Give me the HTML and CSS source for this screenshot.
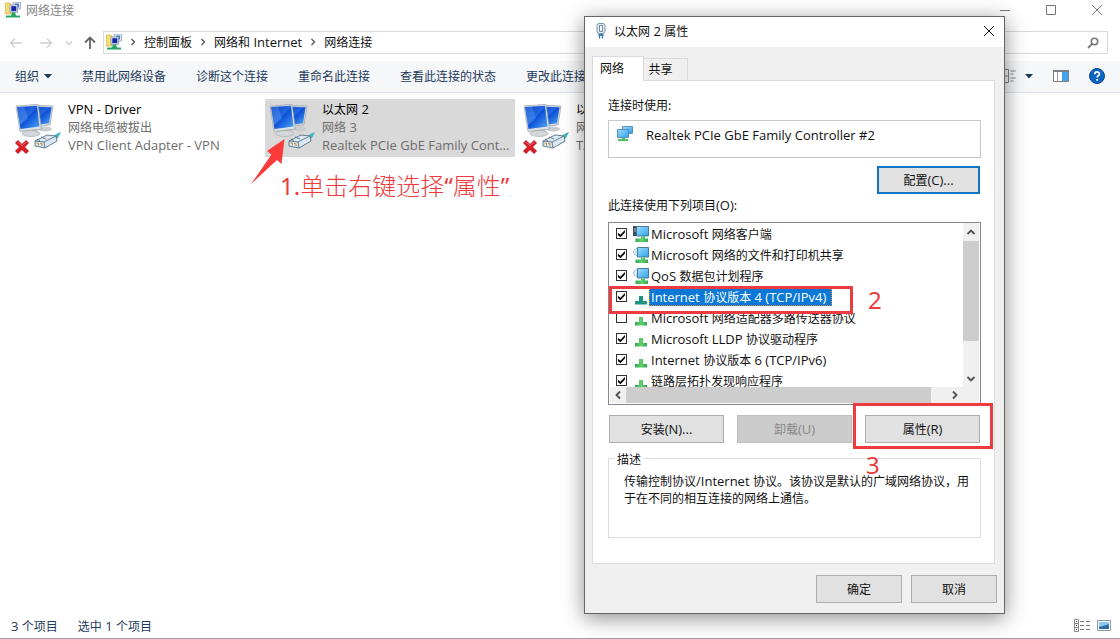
FILE: index.html
```html
<!DOCTYPE html>
<html lang="zh-CN">
<head>
<meta charset="utf-8">
<meta name="viewport" content="width=device-width, initial-scale=1">
<title>网络连接</title>
<link rel="stylesheet" href="styles.css">
</head>
<body>
<svg class="defs" aria-hidden="true">
  <defs>
    <linearGradient id="screen" x1="0" y1="0" x2="1" y2="1">
      <stop offset="0" stop-color="#0a3fc4"/><stop offset=".45" stop-color="#2368e0"/><stop offset=".5" stop-color="#0d4fd6"/><stop offset="1" stop-color="#4fa8f6"/>
    </linearGradient>
    <linearGradient id="sky" x1="0" y1="0" x2="1" y2="1">
      <stop offset="0" stop-color="#9edcfc"/><stop offset="1" stop-color="#2fa3ee"/>
    </linearGradient>
    <linearGradient id="leaf" x1="0" y1="0" x2="1" y2="0">
      <stop offset="0" stop-color="#2fa84f"/><stop offset=".5" stop-color="#63d26f"/><stop offset="1" stop-color="#2fa84f"/>
    </linearGradient>
    <symbol id="folder-net" viewBox="0 0 16 16">
      <path d="M0 1h5l1 1v10H0z" fill="#f3dc73" stroke="#c9a83a" stroke-width=".6"/>
      <path d="M8 0h7.500v7H8z" fill="#dfe6ee" stroke="#8a98ab" stroke-width=".7"/>
      <path d="M10 1.500h4v4h-4z" fill="#4a78d8"/>
      <path d="M5 3h7.500v7.500H5z" fill="#dfe6ee" stroke="#7d8da3" stroke-width=".7"/>
      <path d="M6.300 4.200h5v5h-5z" fill="#1626a5"/>
      <path d="M7 10.500h3l1 3h4v2H1v-2h5z" fill="#27a565"/>
      <path d="M1 13.500h4M11 13.500h4" stroke="#9bdcc0"/>
    </symbol>
    <symbol id="adapter" viewBox="0 0 48 50">
      <ellipse cx="30" cy="27" rx="7" ry="2.500" fill="#c9ccd0"/>
      <path d="M15 3l23 1-3 19-18 2z" fill="#d3d8dd" stroke="#9ba2aa" stroke-width=".7"/>
      <path d="M16 4.500l20.500.8-2.500 16-16 2z" fill="url(#screen)"/>
      <path d="M14 28l8-1 2 5h-9z" fill="#c3c7cc"/>
      <ellipse cx="16" cy="31.500" rx="9" ry="3" fill="#d5d8db" stroke="#a8adb3" stroke-width=".7"/>
      <path d="M1 4l22-1.500L26.500 27 5 29.500z" fill="#dde1e5" stroke="#9ba2aa" stroke-width=".7"/>
      <path d="M2 5l20-1.200L24.500 24.500 5.500 27z" fill="url(#screen)"/>
      <path d="M2 5l7-.4 4 12-8 7z" fill="#6fb4fb" opacity=".3"/>
      <path d="M36 36c4-3 6-5 10-6l-3 6-5 3z" fill="#40b7c2"/>
      <path d="M20 39l12-6 9 1 1 5-12 7-10-2z" fill="#dbe8f2" stroke="#587087" stroke-width=".9"/>
      <path d="M20 39l9 1 12-6M29 40l1 6M22 37l3 2M26 35l5 2" fill="none" stroke="#587087" stroke-width=".9"/>
      <path d="M21.500 41l2 .3v2.200M25 41.500l2 .3v2.200" fill="none" stroke="#b58a36"/>
    </symbol>
    <symbol id="cross" viewBox="0 0 14 14">
      <path d="M3 .5l4 4 4-4 2.500 2.500-4 4 4 4-2.500 2.500-4-4-4 4L.5 11l4-4-4-4z" fill="#e01b24" stroke="#9e0f16" stroke-width=".8"/>
      <path d="M3 2l4 4 4-4" fill="none" stroke="#f78a8c" stroke-width=".7"/>
    </symbol>
    <symbol id="pcs" viewBox="0 0 16 16">
      <path d="M5.500.5h10v7h-10z" fill="url(#sky)" stroke="#3a7fb0" stroke-width=".8"/>
      <path d="M.5 3.500h11v8H.5z" fill="url(#sky)" stroke="#3a7fb0" stroke-width=".8"/>
      <path d="M5 12h3v1h3v2H1v-2h4z" fill="#4cbd62"/>
    </symbol>
    <symbol id="client" viewBox="0 0 16 16">
      <path d="M0 0h5v10H0z" fill="#3e4c59"/><path d="M1 3h3M1 5h3" stroke="#a9bac9"/>
      <path d="M3.500.5h12v9.500h-12z" fill="url(#sky)" stroke="#3f6f92" stroke-width=".9"/>
      <path d="M8 10.500h4v2h3V16H2.500v-3.500H8z" fill="url(#leaf)"/>
    </symbol>
    <symbol id="service" viewBox="0 0 16 16">
      <circle cx="4" cy="5" r="3.500" fill="#dce8f2" stroke="#7e9bb3" stroke-dasharray="1.500 1"/>
      <path d="M4.500.5h11v9.500h-11z" fill="url(#sky)" stroke="#3f6f92" stroke-width=".9"/>
      <path d="M8 10.500h4v2h3V16H2.500v-3.500H8z" fill="url(#leaf)"/>
    </symbol>
    <symbol id="protocol" viewBox="0 0 16 16">
      <path d="M6 7h4v5h4v3.500H2V12h4z" fill="url(#leaf)"/>
    </symbol>
    <symbol id="protocol-on" viewBox="0 0 16 16">
      <path d="M6 7h4v5h4v3.500H2V12h4z" fill="#1f9385"/>
    </symbol>
    <symbol id="close" viewBox="0 0 12 12"><path d="M1 1l10 10M11 1L1 11" fill="none" stroke="currentColor"/></symbol>
    <symbol id="chev" viewBox="0 0 6 8"><path d="M1.500 1l3 3-3 3" fill="none" stroke="currentColor" stroke-width="1.300"/></symbol>
    <symbol id="caret" viewBox="0 0 8 5"><path d="M0 0h8L4 4.500z" fill="currentColor"/></symbol>
  </defs>
</svg>

<div class="explorer">
  <header class="titlebar">
    <svg class="i16"><use href="#folder-net"/></svg>
    <h1 class="title">网络连接</h1>
    <div class="controls">
      <button type="button" aria-label="最小化"><svg viewBox="0 0 12 12"><path d="M1 6.500h10" stroke="currentColor"/></svg></button>
      <button type="button" aria-label="最大化"><svg viewBox="0 0 12 12"><path d="M1.500 1.500h9v9h-9z" fill="none" stroke="currentColor"/></svg></button>
      <button type="button" aria-label="关闭"><svg><use href="#close"/></svg></button>
    </div>
  </header>

  <div class="location">
    <button type="button" class="nav" aria-label="后退"><svg viewBox="0 0 14 14"><path d="M13 7H1.500M6 2.500L1.500 7 6 11.500" fill="none" stroke="currentColor" stroke-width="1.300"/></svg></button>
    <button type="button" class="nav" aria-label="前进"><svg viewBox="0 0 14 14"><path d="M1 7h11.500M8 2.500L12.500 7 8 11.500" fill="none" stroke="currentColor" stroke-width="1.300"/></svg></button>
    <button type="button" class="nav recent" aria-label="最近浏览的位置"><svg viewBox="0 0 8 8"><path d="M1 2.500l3 3 3-3" fill="none" stroke="currentColor" stroke-width="1.300"/></svg></button>
    <button type="button" class="nav up" aria-label="上移"><svg viewBox="0 0 14 14"><path d="M7 13V2M2 6.500L7 1.500l5 5" fill="none" stroke="currentColor" stroke-width="1.800"/></svg></button>
    <nav class="crumbs" aria-label="地址">
      <svg class="i16"><use href="#folder-net"/></svg>
      <svg class="chev"><use href="#chev"/></svg>
      <a href="#">控制面板</a>
      <svg class="chev"><use href="#chev"/></svg>
      <a href="#">网络和<span class="en"> Internet</span></a>
      <svg class="chev"><use href="#chev"/></svg>
      <a href="#">网络连接</a>
    </nav>
    <div class="search">
      <input type="search" aria-label="搜索">
      <svg viewBox="0 0 12 12"><circle cx="7.500" cy="4.500" r="3.200" fill="none" stroke="currentColor" stroke-width="1.600"/><path d="M5 7L1 11" stroke="currentColor" stroke-width="1.800"/></svg>
    </div>
  </div>

  <div class="toolbar">
    <button type="button" class="organize">组织 <svg class="caret"><use href="#caret"/></svg></button>
    <button type="button">禁用此网络设备</button>
    <button type="button">诊断这个连接</button>
    <button type="button">重命名此连接</button>
    <button type="button">查看此连接的状态</button>
    <button type="button">更改此连接的设置</button>
    <div class="views">
      <button type="button" aria-label="更改视图"><svg class="i16" viewBox="0 0 16 16"><path d="M1.500 1.500h6v13h-6zM1.500 8h6M9.500 3h5M9.500 6h3M9.500 10h5M9.500 13h3" fill="none" stroke="#7c8188"/></svg><svg class="caret"><use href="#caret"/></svg></button>
      <button type="button" aria-label="预览窗格"><svg class="i16" viewBox="0 0 16 16"><path d="M.5 2.500h15v11H.5z" fill="#fff" stroke="#7c8188"/><path d="M0 3h16" stroke="#7c8188" stroke-width="2"/><path d="M4.500 4v9" stroke="#9aa0a6"/><path d="M9 4h6v9H9z" fill="#43a3f0"/></svg></button>
      <button type="button" aria-label="帮助"><svg class="i16" viewBox="0 0 16 16"><circle cx="8" cy="8" r="7.500" fill="#0b66c3" stroke="#07498f"/><path d="M5.800 6.200c0-3 4.600-3 4.600-.2 0 1.600-2.200 1.500-2.200 3.600M8.200 11v1.800" fill="none" stroke="#fff" stroke-width="1.700"/></svg></button>
    </div>
  </div>

  <main class="files">
    <article class="file">
      <div class="pic"><svg class="big"><use href="#adapter"/></svg><svg class="badge"><use href="#cross"/></svg></div>
      <div class="info"><p class="name en">VPN - Driver</p><p>网络电缆被拔出</p><p class="en">VPN Client Adapter - VPN</p></div>
    </article>
    <article class="file selected">
      <div class="pic"><svg class="big"><use href="#adapter"/></svg></div>
      <div class="info"><p class="name">以太网<span class="en"> 2</span></p><p>网络<span class="en"> 3</span></p><p class="en">Realtek PCIe GbE Family Controller #2</p></div>
      <svg class="arrow" viewBox="0 0 36 48"><path d="M34.500 1L17 13l4.500 3.500L1 46l26-24 4.500 4z" fill="#fb3a3a"/></svg>
      <p class="mark step-one"><span class="num">1.</span>单击右键选择<span class="num">“</span>属性<span class="num">”</span></p>
    </article>
    <article class="file">
      <div class="pic"><svg class="big"><use href="#adapter"/></svg><svg class="badge"><use href="#cross"/></svg></div>
      <div class="info"><p class="name">以太网</p><p>网络电缆被拔出</p><p class="en">TAP Adapter</p></div>
    </article>
  </main>

  <footer class="status">
    <span><span class="en">3 </span>个项目</span>
    <span>选中<span class="en"> 1 </span>个项目</span>
    <div class="modes">
      <button type="button" aria-label="详细信息"><svg class="i16" viewBox="0 0 16 14"><path d="M.5.5h4v12h-4zM.5 4.500h4M.5 8.500h4" fill="none" stroke="#8a8a8a"/><path d="M2 2.500h1M2 6.500h1M2 10.500h1" stroke="#555"/><path d="M6 2.500h10M6 6.500h10M6 10.500h10" stroke="#777" stroke-dasharray="4 2"/></svg></button>
      <button type="button" aria-label="大图标"><svg class="i16" viewBox="0 0 16 14"><path d="M1.500 1.500h13v10h-13z" fill="#fff" stroke="#8a98a8"/><path d="M3 3h10v7H3z" fill="#8cc8f2"/><path d="M3 8l4-1 6-2v5H3z" fill="#2c6ba6"/></svg></button>
    </div>
  </footer>
</div>

<section class="dialog" role="dialog" aria-labelledby="dlg-title">
  <header class="dlg-bar">
    <svg class="plug" viewBox="0 0 10 16"><rect x="1" y=".5" width="8" height="10" rx="2" fill="#dfeaf3" stroke="#7d99b0"/><path d="M3.500 2.500h3v6h-3z" fill="#fff" stroke="#6e8ba5"/><path d="M2.500 11h5v2h-5z" fill="#3f7fb5"/><path d="M3.500 13v2.500M6.500 13v2.500" stroke="#3a75ab" stroke-width="1.300"/></svg>
    <h2 class="title" id="dlg-title">以太网<span class="en"> 2 </span>属性</h2>
    <button type="button" class="dlg-close" aria-label="关闭"><svg><use href="#close"/></svg></button>
  </header>
  <div class="dlg-body">
    <div class="tabs" role="tablist">
      <button type="button" role="tab" class="tab active" aria-selected="true">网络</button>
      <button type="button" role="tab" class="tab" aria-selected="false">共享</button>
    </div>
    <div class="panel">
      <p class="label">连接时使用:</p>
      <div class="device"><svg class="i16"><use href="#pcs"/></svg><span class="en">Realtek PCIe GbE Family Controller #2</span></div>
      <button type="button" class="btn configure">配置<span class="en">(C)...</span></button>
      <p class="label">此连接使用下列项目<span class="en">(O):</span></p>
      <div class="listbox">
        <div class="items">
          <label class="item"><input type="checkbox" checked><svg class="i16"><use href="#client"/></svg><span class="txt"><span class="en">Microsoft </span>网络客户端</span></label>
          <label class="item"><input type="checkbox" checked><svg class="i16"><use href="#service"/></svg><span class="txt"><span class="en">Microsoft </span>网络的文件和打印机共享</span></label>
          <label class="item"><input type="checkbox" checked><svg class="i16"><use href="#service"/></svg><span class="txt"><span class="en">QoS </span>数据包计划程序</span></label>
          <label class="item current"><input type="checkbox" checked><svg class="i16"><use href="#protocol-on"/></svg><span class="txt"><span class="en">Internet </span>协议版本<span class="en"> 4 (TCP/IPv4)</span></span></label>
          <label class="item"><input type="checkbox"><svg class="i16"><use href="#protocol"/></svg><span class="txt"><span class="en">Microsoft </span>网络适配器多路传送器协议</span></label>
          <label class="item"><input type="checkbox" checked><svg class="i16"><use href="#protocol"/></svg><span class="txt"><span class="en">Microsoft LLDP </span>协议驱动程序</span></label>
          <label class="item"><input type="checkbox" checked><svg class="i16"><use href="#protocol"/></svg><span class="txt"><span class="en">Internet </span>协议版本<span class="en"> 6 (TCP/IPv6)</span></span></label>
          <label class="item"><input type="checkbox" checked><svg class="i16"><use href="#protocol"/></svg><span class="txt">链路层拓扑发现响应程序</span></label>
        </div>
        <div class="vbar">
          <svg viewBox="0 0 16 16"><path d="M4.500 10L8 6.500l3.500 3.500" fill="none" stroke="#505050" stroke-width="1.800"/></svg>
          <div class="vthumb"></div>
          <svg viewBox="0 0 16 16"><path d="M4.500 6L8 9.500 11.500 6" fill="none" stroke="#505050" stroke-width="1.800"/></svg>
        </div>
        <div class="hbar">
          <svg viewBox="0 0 16 16"><path d="M10 4.500L6.500 8l3.500 3.500" fill="none" stroke="#505050" stroke-width="1.800"/></svg>
          <div class="hthumb"></div>
          <svg viewBox="0 0 16 16"><path d="M6 4.500L9.500 8 6 11.500" fill="none" stroke="#505050" stroke-width="1.800"/></svg>
        </div>
      </div>
      <div class="actions">
        <button type="button" class="btn">安装<span class="en">(N)...</span></button>
        <button type="button" class="btn" disabled>卸载<span class="en">(U)</span></button>
        <button type="button" class="btn">属性<span class="en">(R)</span></button>
      </div>
      <fieldset class="about">
        <legend>描述</legend>
        <p>传输控制协议<span class="en">/Internet </span>协议。该协议是默认的广域网络协议，用于在不同的相互连接的网络上通信。</p>
      </fieldset>
    </div>
    <div class="confirm">
      <button type="button" class="btn">确定</button>
      <button type="button" class="btn">取消</button>
    </div>
  </div>
  <div class="frame frame-two"></div>
  <span class="mark num step-two">2</span>
  <div class="frame frame-three"></div>
  <span class="mark num step-three">3</span>
</section>
</body>
</html>
```

FILE: styles.css
```css
* { box-sizing: border-box; }

body {
  margin: 0;
  position: relative;
  background: #fff;
  color: #111;
  font: 12px/18px "Noto Sans CJK SC", "Noto Sans", sans-serif;
}

p, h1, h2 { margin: 0; }
svg { display: block; flex: none; }
button, input { font: inherit; color: inherit; }
button { padding: 0; border: 0; background: none; white-space: nowrap; }
a { color: inherit; text-decoration: none; }

.defs { position: absolute; width: 0; height: 0; }
.en { font-family: "Open Sans", "Noto Sans", sans-serif; font-size: 13px; }
span .en, p .en, a .en, h2 .en { line-height: 1; }
.i16 { width: 16px; height: 16px; }
.caret { width: 8px; height: 5px; }
.title { font-size: 12px; font-weight: 400; }

/* Explorer window */
.explorer {
  display: flex;
  flex-direction: column;
  min-height: 100vh;
  overflow: hidden;
  border-bottom: 1px solid #a0a0a0;
}

.titlebar { display: flex; align-items: center; gap: 5px; height: 20px; padding: 0 17px 0 5px; color: #888; }
.controls { display: flex; gap: 34px; margin-left: auto; color: #777; }
.controls svg { width: 12px; height: 12px; }

.location { display: flex; align-items: center; padding: 11px 12px 7px 9px; }
.nav { width: 16px; margin-right: 14px; color: #cfcfcf; }
.nav svg { width: 14px; height: 14px; }
.nav.recent { width: 8px; margin-right: 10px; margin-left: -4px; }
.nav.recent svg { width: 8px; height: 8px; }
.nav.up { margin-right: 4px; color: #666; }

.crumbs {
  display: flex;
  flex: 1;
  align-items: center;
  gap: 8px;
  height: 23px;
  margin-right: 12px;
  padding: 0 2px 1px;
  border: 1px solid #d9d9d9;
}
.crumbs .chev { width: 6px; height: 8px; color: #555; }

.search { display: flex; align-items: center; width: 224px; height: 23px; padding-right: 8px; border: 1px solid #d9d9d9; color: #777; }
.search input { flex: 1; min-width: 0; border: 0; outline: 0; background: none; }
.search svg { width: 12px; height: 12px; }

.toolbar {
  display: flex;
  align-items: center;
  gap: 30px;
  height: 32px;
  padding: 0 15px 1px;
  border-bottom: 1px solid #dde3ea;
  background: #f5f7f9;
  color: #1e395b;
}
.organize { display: flex; align-items: center; gap: 5px; }
.views { display: flex; align-items: center; gap: 20px; margin-left: auto; }
.views button { display: flex; align-items: center; gap: 8px; }

.files {
  display: grid;
  flex: 1;
  grid-template-columns: repeat(auto-fill, 250px);
  align-content: start;
  gap: 4px;
  padding: 6px 11px;
}
.file { position: relative; display: flex; gap: 5px; height: 58px; padding: 1px 4px; color: #6d6d6d; }
.file.selected { background: #d9d9d9; }
.pic { position: relative; flex: none; padding-top: 2px; }
.big { width: 48px; height: 50px; }
.badge { position: absolute; left: 0; bottom: 2px; width: 14px; height: 14px; }
.info { min-width: 0; }
.info p { overflow: hidden; height: 18px; white-space: nowrap; text-overflow: ellipsis; }
.info .name { color: #000; }

.status { display: flex; align-items: center; gap: 20px; height: 25px; padding: 0 8px 0 11px; color: #1e395b; }
.modes { display: flex; gap: 6px; margin-left: auto; }

/* Dialog */
.dialog {
  position: absolute;
  left: 584px;
  top: 16px;
  width: 421px;
  border: 1px solid #666;
  background: #f0f0f0;
  box-shadow: 0 4px 20px rgba(0, 0, 0, .45);
}
.dlg-bar { display: flex; align-items: center; gap: 8px; height: 30px; padding: 0 9px 2px 11px; background: #fff; }
.plug { width: 10px; height: 16px; }
.dlg-close { margin-left: auto; }
.dlg-close svg { width: 12px; height: 12px; }
.dlg-body { padding: 9px 7px 10px; }

.tabs { display: flex; align-items: flex-end; }
.tab { width: 44px; height: 22px; border: 1px solid #d9d9d9; border-width: 1px 1px 0 0; padding: 0 10px 2px 0; }
.tab.active { z-index: 1; width: 52px; height: 25px; margin-bottom: -1px; padding-right: 12px; border-left-width: 1px; background: #fff; }

.panel { display: flex; flex-direction: column; padding: 15px 13px 25px 15px; border: 1px solid #dcdcdc; background: #fff; margin-right: 2px; }
.label { height: 18px; }
.device { display: flex; gap: 13px; height: 38px; margin-top: 6px; padding: 5px 8px; border: 1px solid #c8c8c8; }
.btn { height: 28px; border: 1px solid #adadad; background: #e1e1e1; }
.btn:disabled { border-color: #bfbfbf; background: #ccc; color: #888; }
.configure { align-self: flex-end; width: 103px; margin: 8px 1px 2px; border: 2px solid #0f74c6; }

.listbox {
  display: grid;
  grid-template: 164px 16px / 1fr 16px;
  margin-top: 8px;
  padding: 0 1px 1px;
  border: 1px solid #828790;
}
.items { overflow: hidden; }
.item { display: flex; align-items: center; height: 21px; padding-left: 6px; white-space: nowrap; }
.item input { appearance: none; flex: none; width: 11px; height: 11px; margin: 0 6px 0 0; border: 1px solid #333; background: #fff; }
.item input:checked::before {
  content: "";
  display: block;
  height: 9px;
  background: #000;
  clip-path: polygon(10% 42%, 38% 64%, 88% 10%, 88% 40%, 38% 92%, 10% 68%);
}
.txt { height: 19px; padding: 0 6px 0 2px; line-height: 19px; }
.current .txt { background: #0a78d7; color: #fff; outline: 1px dotted #e0862a; outline-offset: -1px; }

.vbar { display: flex; flex-direction: column; justify-content: space-between; padding-top: 1px; background: #f0f0f0; }
.hbar { display: flex; grid-column: 1 / -1; padding-right: 16px; justify-content: space-between; background: #f0f0f0; }
.vbar svg, .hbar svg { width: 16px; height: 16px; }
.vthumb { height: 100px; margin-bottom: 30px; background: #cdcdcd; }
.hthumb { flex: 1; margin-right: 16px; background: #cdcdcd; }

.actions { display: grid; grid-template-columns: repeat(3, 1fr); gap: 13px; margin: 10px 1px 0; }
.about { min-width: 0; height: 88px; margin: 7px 0 0; padding: 5px 8px 0 15px; border: 1px solid #dcdcdc; line-height: 17px; }
.about legend { margin-left: -10px; padding: 0 3px; }

.confirm { display: flex; justify-content: flex-end; gap: 9px; margin-top: 11px; }
.confirm .btn { width: 86px; }

/* Tutorial marks */
.mark { position: absolute; color: #ee3b40; font-size: 24px; font-weight: 300; line-height: 28px; white-space: nowrap; }
.num { font-family: "Noto Sans", sans-serif; font-weight: 400; }
.arrow { position: absolute; left: -15px; top: 39px; width: 36px; height: 48px; }
.step-one { left: 15px; top: 72px; }
.frame { position: absolute; border: 3px solid #ee3b40; pointer-events: none; }
.frame-two { left: 24px; top: 269px; width: 244px; height: 28px; }
.step-two { left: 283px; top: 269px; }
.frame-three { left: 268px; top: 386px; width: 140px; height: 46px; }
.step-three { left: 281px; top: 434px; }
```
